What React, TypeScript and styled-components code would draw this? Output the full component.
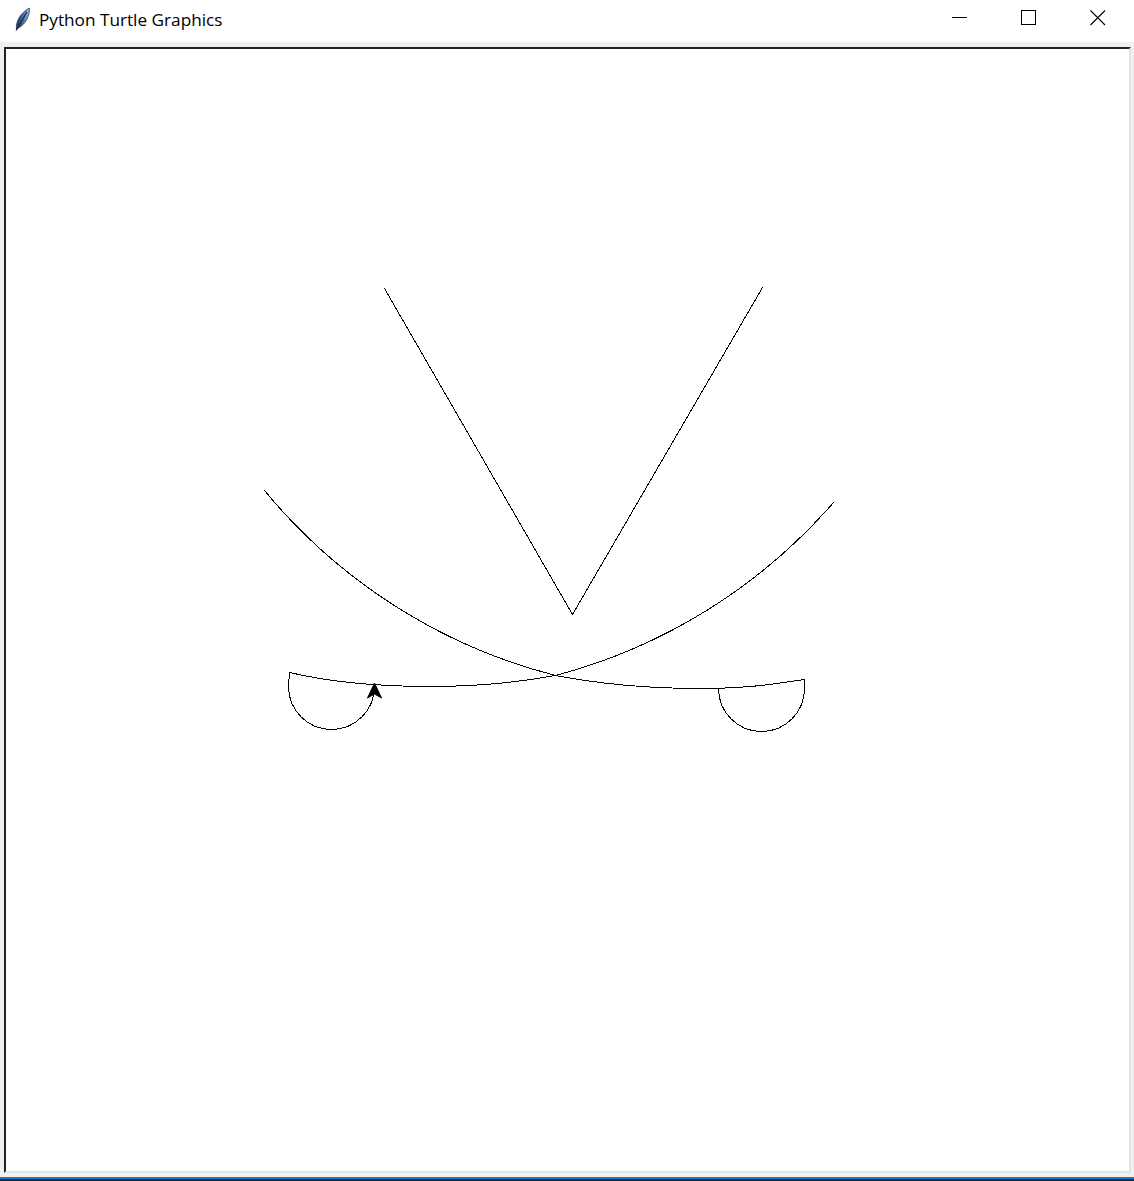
import React from "react";
import styled, { createGlobalStyle } from "styled-components";

const Global = createGlobalStyle`
  html, body { margin: 0; padding: 0; background: #ffffff; }
  body { width: 1134px; height: 1181px; overflow: hidden; }
  #root { width: 1134px; height: 1181px; }
`;

const Window = styled.div`
  display: flex;
  flex-direction: column;
  width: 1134px;
  height: 1181px;
  background: #ffffff;
`;

const TitleBar = styled.div`
  display: flex;
  align-items: center;
  height: 42px;
  background: #ffffff;
  padding-left: 14px;
  box-sizing: border-box;
`;

const AppIcon = styled.svg`
  width: 18px;
  height: 24px;
  margin-top: -4px;
  flex: none;
`;

const Title = styled.div`
  margin-left: 7px;
  margin-top: -4px;
  font-family: "Segoe UI", "Open Sans", "Noto Sans", sans-serif;
  font-size: 17.2px;
  color: #000000;
  flex: 1;
  white-space: nowrap;
`;

const Controls = styled.div`
  display: flex;
  height: 100%;
  padding-right: 2px;
`;

const ControlButton = styled.div`
  width: 69px;
  height: 100%;
  display: flex;
  align-items: flex-start;
  justify-content: center;
  padding-top: 10px;
  box-sizing: border-box;
`;

const Client = styled.div`
  flex: 1;
  background: #f0f0f0;
  padding: 5px 3px 4px 4px;
  display: flex;
  min-height: 0;
`;

const CanvasFrame = styled.div`
  flex: 1;
  background: #ffffff;
  border-top: 2px solid #222222;
  border-left: 2px solid #222222;
  border-right: 2px solid #e3e3e3;
  border-bottom: 2px solid #e3e3e3;
  overflow: hidden;
  display: flex;
`;

const Drawing = styled.svg`
  display: block;
  width: 1123px;
  height: 1122px;
  flex: none;
`;

const TaskEdge = styled.div`
  height: 4px;
  background: linear-gradient(#1e78c8 0 2px, #1b2a3a 2px 4px);
  flex: none;
`;

export default function App() {
  return (
    <>
      <Global />
      <Window>
        <TitleBar>
          <AppIcon viewBox="0 0 18 24">
            <defs>
              <linearGradient id="fg" x1="0" y1="0" x2="1" y2="0">
                <stop offset="0" stopColor="#1f3350" />
                <stop offset="0.55" stopColor="#4a74ab" />
                <stop offset="1" stopColor="#a8c4e6" />
              </linearGradient>
            </defs>
            <path d="M2.5 22.5 C 1.5 15, 6 6, 15.5 1 C 16 8, 12 17, 4.5 21 Z" fill="url(#fg)" stroke="#2a3c56" strokeWidth="0.8" />
            <path d="M2 23.5 L 13 5" stroke="#16243a" strokeWidth="1.1" />
          </AppIcon>
          <Title>Python Turtle Graphics</Title>
          <Controls>
            <ControlButton>
              <svg width="16" height="16" viewBox="0 0 16 16">
                <path d="M0 7.5 H15" stroke="#000" strokeWidth="1" />
              </svg>
            </ControlButton>
            <ControlButton>
              <svg width="16" height="16" viewBox="0 0 16 16">
                <rect x="0.5" y="0.5" width="14" height="14" fill="none" stroke="#000" strokeWidth="1" />
              </svg>
            </ControlButton>
            <ControlButton>
              <svg width="16" height="16" viewBox="0 0 16 16">
                <path d="M0.5 0.5 L15 15 M15 0.5 L0.5 15" stroke="#000" strokeWidth="1.1" />
              </svg>
            </ControlButton>
          </Controls>
        </TitleBar>
        <Client>
          <CanvasFrame>
            <Drawing viewBox="6 49 1123 1122">
              <g fill="none" stroke="#000" strokeWidth="1" shapeRendering="crispEdges">
                <path d="M384.5 288.5 L572.5 614.5 L762.5 287.5" />
                <path d="M264.5 490.5 A 556 556 0 0 0 555.5 675.5 C 600 684 650 688.5 700.5 688.5 S 780 683 804.5 679.5 L804.5 688.5 A 43 43 0 0 1 718.5 688.5" />
                <path d="M833.5 502.5 A 556 556 0 0 1 555.5 675.5 C 515 683 480 686.5 430.5 686.5 S 330 682 289.5 672.5 L288.5 686.5 A 43 43 0 0 0 374.5 686.5" />
              </g>
              <polygon points="374.5,683 367.5,698 374.5,694 381.5,698" fill="#000" stroke="#000" strokeWidth="1" strokeLinejoin="miter" />
            </Drawing>
          </CanvasFrame>
        </Client>
        <TaskEdge />
      </Window>
    </>
  );
}
